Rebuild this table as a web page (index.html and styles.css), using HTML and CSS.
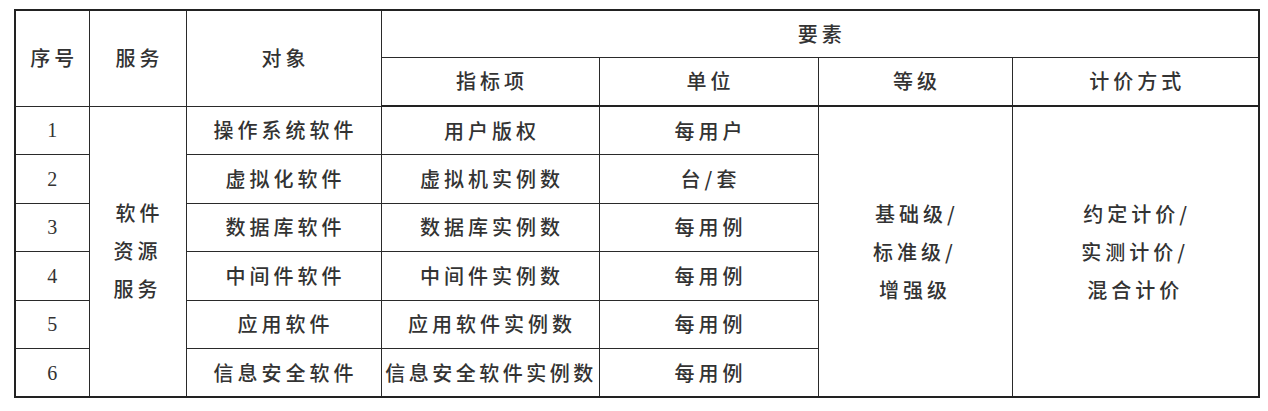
FILE: index.html
```html
<!DOCTYPE html>
<html lang="zh-CN">
<head>
<meta charset="utf-8">
<link rel="stylesheet" href="styles.css">
</head>
<body>
<table class="grid">
  <colgroup>
    <col class="c-no"><col class="c-svc"><col class="c-obj"><col class="c-idx"><col class="c-unit"><col class="c-lvl"><col class="c-price">
  </colgroup>
  <thead>
    <tr class="h1">
      <th rowspan="2">序号</th>
      <th rowspan="2">服务</th>
      <th rowspan="2">对象</th>
      <th colspan="4">要素</th>
    </tr>
    <tr class="h2">
      <th>指标项</th>
      <th>单位</th>
      <th>等级</th>
      <th>计价方式</th>
    </tr>
  </thead>
  <tbody>
    <tr>
      <td class="num">1</td>
      <td rowspan="6" class="multi">软件<br>资源<br>服务</td>
      <td>操作系统软件</td>
      <td>用户版权</td>
      <td>每用户</td>
      <td rowspan="6" class="multi">基础级/<br>标准级/<br>增强级</td>
      <td rowspan="6" class="multi">约定计价/<br>实测计价/<br>混合计价</td>
    </tr>
    <tr>
      <td class="num">2</td>
      <td>虚拟化软件</td>
      <td>虚拟机实例数</td>
      <td>台/套</td>
    </tr>
    <tr>
      <td class="num">3</td>
      <td>数据库软件</td>
      <td>数据库实例数</td>
      <td>每用例</td>
    </tr>
    <tr>
      <td class="num">4</td>
      <td>中间件软件</td>
      <td>中间件实例数</td>
      <td>每用例</td>
    </tr>
    <tr>
      <td class="num">5</td>
      <td>应用软件</td>
      <td>应用软件实例数</td>
      <td>每用例</td>
    </tr>
    <tr>
      <td class="num">6</td>
      <td>信息安全软件</td>
      <td class="tight">信息安全软件实例数</td>
      <td>每用例</td>
    </tr>
  </tbody>
</table>
</body>
</html>
```

FILE: styles.css
```css
html, body {
  margin: 0;
  background: #ffffff;
}
body {
  padding: 9px 0 0 14px;
}
.grid {
  border-collapse: collapse;
  table-layout: fixed;
  width: 1244px;
  font-family: "Noto Sans CJK SC", "Liberation Serif", serif;
  font-size: 20px;
  color: #333333;
  border: 2px solid #222;
}
.c-no { width: 74px; }
.c-svc { width: 97px; }
.c-obj { width: 195px; }
.c-idx { width: 218px; }
.c-unit { width: 219px; }
.c-lvl { width: 194px; }
.c-price { width: 247px; }
.grid th, .grid td {
  border: 1.5px solid #2a2a2a;
  padding: 0;
  text-align: center;
  vertical-align: middle;
  white-space: nowrap;
  font-weight: 500;
  letter-spacing: 4px;
  text-indent: 4px;
  line-height: 24px;
}
.grid thead tr.h1 { height: 47px; }
.grid thead tr.h2 { height: 49px; }
.grid thead tr.h2 th { border-bottom: 2px solid #222; }
.grid tbody tr { height: 48.5px; }
.grid td.num {
  font-family: "Liberation Serif", serif;
  font-size: 20px;
  font-weight: 400;
  letter-spacing: 0;
  text-indent: 0;
}
.grid td.multi {
  line-height: 38px;
}
.grid td.tight {
  letter-spacing: 3.5px;
  text-indent: 2px;
}
```
